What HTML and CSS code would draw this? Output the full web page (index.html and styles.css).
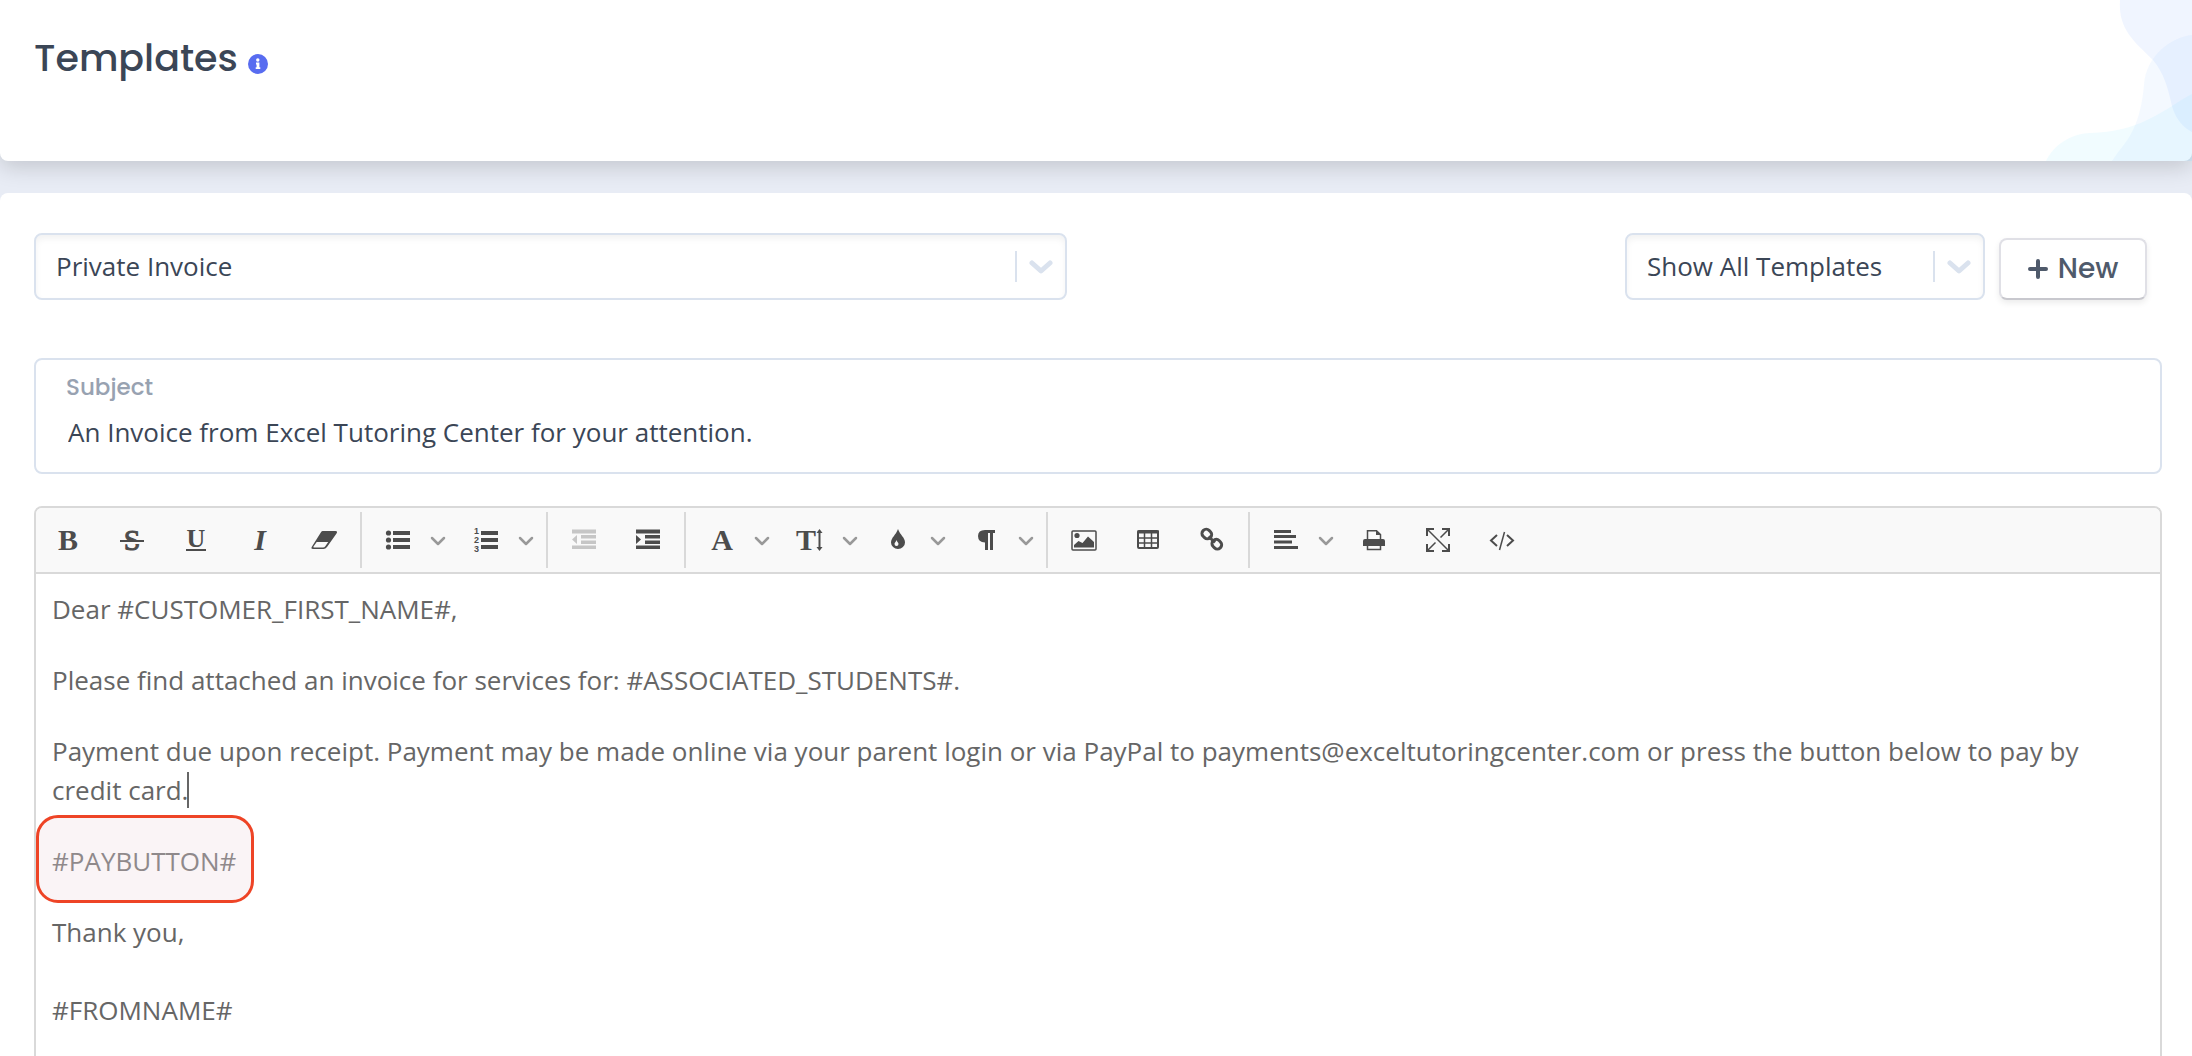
FILE: index.html
```html
<!DOCTYPE html>
<html lang="en">
<head>
    <meta charset="UTF-8">
    <meta name="viewport" content="width=device-width, initial-scale=1.0">
    <title>Templates</title>
    <link rel="stylesheet" href="styles.css">
</head>
<body>
    <header class="page-header">
        <h1>Templates</h1>
        <svg class="info" viewBox="0 0 20 20" role="img" aria-label="Info">
            <circle cx="10" cy="10" r="10" fill="#586cf0"/>
            <circle cx="9.8" cy="6" r="1.7" fill="#fff"/>
            <path d="M8 8.6h3.4v4.6h.9v1.8H7.7v-1.8h.9v-2.8H8z" fill="#fff"/>
        </svg>
        <svg class="blobs" viewBox="0 0 200 161" aria-hidden="true">
            <path fill="#5a8cfa" fill-opacity=".09" d="M128 0C126 30 143 42 161 60C172 73 176 88 180 106C184 120 192 128 200 132V0Z"/>
            <path fill="#96c8ff" fill-opacity=".1" d="M200 35C180 37 154 55 152 85C149 118 140 135 131 146Q125 153 120 161H200Z"/>
            <path fill="#73e1ff" fill-opacity=".1" d="M54 161C62 145 78 134 98 133C130 132 150 125 180 106Q192 98 200 94V161Z"/>
        </svg>
    </header>

    <main class="card">
        <div class="top-row">
            <div class="select-box template-select">
                <select aria-label="Template">
                    <option>Private Invoice</option>
                </select>
                <svg class="select-arrow" viewBox="0 0 24 16"><path d="M3 3l9 8 9-8"/></svg>
            </div>
            <div class="select-box filter-select">
                <select aria-label="Filter templates">
                    <option>Show All Templates</option>
                </select>
                <svg class="select-arrow" viewBox="0 0 24 16"><path d="M3 3l9 8 9-8"/></svg>
            </div>
            <button class="btn-new" type="button">
                <svg viewBox="0 0 20 20"><path d="M10 2v16M2 10h16"/></svg>
                New
            </button>
        </div>

        <div class="subject">
            <label for="subject">Subject</label>
            <input type="text" id="subject" value="An Invoice from Excel Tutoring Center for your attention.">
        </div>

        <div class="editor">
            <div class="toolbar" role="toolbar" aria-label="Formatting">
                <button type="button" title="Bold"><svg viewBox="0 0 32 32"><text x="16" y="26" class="glyph">B</text></svg></button>
                <button type="button" title="Strikethrough"><svg viewBox="0 0 32 32"><text x="16" y="26" class="glyph light">S</text><path class="halo" d="M4 19h24"/><path class="line" d="M4 17h24"/></svg></button>
                <button type="button" title="Underline"><svg viewBox="0 0 32 32"><text x="16" y="23" class="glyph small">U</text><path class="line" d="M6 26h20"/></svg></button>
                <button type="button" title="Italic"><svg viewBox="0 0 32 32"><text x="16" y="26" class="glyph italic">I</text></svg></button>
                <button type="button" title="Clear formatting"><svg viewBox="0 0 32 32"><path fill-rule="evenodd" d="M14.500 7H27.500Q30 7 28.500 9.500L19 23Q17.500 25 15.500 25H5Q2.500 25 4 22.500L12.500 9Q13.500 7 14.500 7ZM8.700 18L5.500 22.500Q5 23.500 6 23.500H15Q16.500 23.500 17.300 22.300L20.200 18Z"/></svg></button>
                <span class="sep"></span>
                <button type="button" title="Bulleted list"><svg viewBox="0 0 32 32"><circle cx="6.500" cy="9" r="2.600"/><circle cx="6.500" cy="16" r="2.600"/><circle cx="6.500" cy="23" r="2.600"/><path d="M11 7h17v4H11zM11 14h17v4H11zM11 21h17v4H11z"/></svg></button>
                <button type="button" class="drop" title="List options"><svg viewBox="0 0 16 16"><path d="M2 6l6 6 6-6"/></svg></button>
                <button type="button" title="Numbered list"><svg viewBox="0 0 32 32"><text x="4" y="10" class="digit">1</text><text x="4" y="19" class="digit">2</text><text x="4" y="28" class="digit">3</text><path d="M11 7h17v4H11zM11 14h17v4H11zM11 21h17v4H11z"/></svg></button>
                <button type="button" class="drop" title="Numbering options"><svg viewBox="0 0 16 16"><path d="M2 6l6 6 6-6"/></svg></button>
                <span class="sep"></span>
                <button type="button" title="Decrease indent" disabled><svg viewBox="0 0 32 32"><path d="M4 5.500h24v4H4zM13 11h15v3.500H13zM13 16.500h15v3.500H13zM4 21.500h24v3.500H4zM9 11v9l-5-4.500z"/></svg></button>
                <button type="button" title="Increase indent"><svg viewBox="0 0 32 32"><path d="M4 5.500h24v4H4zM13 11h15v3.500H13zM13 16.500h15v3.500H13zM4 21.500h24v3.500H4zM4 11v9l5-4.500z"/></svg></button>
                <span class="sep"></span>
                <button type="button" title="Font family"><svg viewBox="0 0 32 32"><text x="16" y="26" class="glyph">A</text></svg></button>
                <button type="button" class="drop" title="Font list"><svg viewBox="0 0 16 16"><path d="M2 6l6 6 6-6"/></svg></button>
                <button type="button" title="Font size"><svg viewBox="0 0 32 32"><text x="12" y="26" class="glyph">T</text><path d="M25.500 5l3 4h-2v14h2l-3 4-3-4h2V9h-2z"/></svg></button>
                <button type="button" class="drop" title="Size list"><svg viewBox="0 0 16 16"><path d="M2 6l6 6 6-6"/></svg></button>
                <button type="button" title="Colors"><svg viewBox="0 0 32 32"><path fill-rule="evenodd" d="M16 5C18 11 23 13.500 23 18.500A7 6.500 0 0 1 9 18.500C9 13.500 14 11 16 5ZM14.500 16C14 18 12.500 18.500 12.500 20A2 2 0 0 0 16.500 20C16.500 18.500 15 18 14.500 16Z"/></svg></button>
                <button type="button" class="drop" title="Color list"><svg viewBox="0 0 16 16"><path d="M2 6l6 6 6-6"/></svg></button>
                <button type="button" title="Paragraph format"><svg viewBox="0 0 32 32"><path d="M25 6v3h-2v17h-3V9h-2v17h-3v-7.500Q8 18 8 12T15 6z"/></svg></button>
                <button type="button" class="drop" title="Paragraph list"><svg viewBox="0 0 16 16"><path d="M2 6l6 6 6-6"/></svg></button>
                <span class="sep"></span>
                <button type="button" title="Insert image"><svg viewBox="0 0 32 32"><rect class="thin" x="4" y="7" width="24" height="19" rx="1"/><circle cx="9" cy="11.500" r="2.600"/><path d="M6 23.500v-2.500l4.500-4 4 2 5.500-6.500 6 5.500v5.500z"/></svg></button>
                <button type="button" title="Insert table"><svg viewBox="0 0 32 32"><rect class="line" x="6" y="7" width="20" height="17" rx="1"/><path d="M5.500 6.500h21.500V9.500H5.500z"/><path class="thin" d="M12.500 9v15.500M19.500 9v15.500M6 14h20M6 19h20"/></svg></button>
                <button type="button" title="Insert link"><svg viewBox="0 0 32 32"><g class="ring"><rect x="5.800" y="5.800" width="10" height="8.400" rx="4" transform="rotate(45 10.800 10)"/><rect x="15.800" y="16" width="10" height="8.400" rx="4" transform="rotate(45 20.800 20.200)"/><path d="M12.500 12.500l6.500 6"/></g></svg></button>
                <span class="sep"></span>
                <button type="button" title="Align"><svg viewBox="0 0 32 32"><path d="M4 6h17v3H4zM4 11h22v3H4zM4 16.500h18v3H4zM4 22h24v3H4z"/></svg></button>
                <button type="button" class="drop" title="Align options"><svg viewBox="0 0 16 16"><path d="M2 6l6 6 6-6"/></svg></button>
                <button type="button" title="Print"><svg viewBox="0 0 32 32"><path class="thin" d="M9.500 16V6.700H18.500L22.500 10.500V16M9.500 20V25.500H22.500V20"/><path d="M18 6v5h5zM7 15H25Q27 15 27 17V22H5V17Q5 15 7 15Z"/></svg></button>
                <button type="button" title="Fullscreen"><svg viewBox="0 0 32 32"><path class="line" d="M5 12V5h7M20 5h7v7M27 20v7h-7M12 27H5v-7"/><path class="thin" d="M5 5l22 22M27 5l-8.500 8.500M5 27l8.500-8.500"/></svg></button>
                <button type="button" title="Code view"><svg viewBox="0 0 32 32"><path class="line" d="M11 11l-6 5.500 6 5.500M21 11l6 5.500-6 5.500"/><path class="thin" d="M18.500 8l-5 18"/></svg></button>
            </div>
            <div class="content" contenteditable="true" spellcheck="false">
                <p>Dear #CUSTOMER_FIRST_NAME#,</p>
                <p>Please find attached an invoice for services for: #ASSOCIATED_STUDENTS#.</p>
                <p>Payment due upon receipt. Payment may be made online via your parent login or via PayPal to payments@exceltutoringcenter.com or press the button below to pay by credit card.<span class="caret"></span></p>
                <p><span class="marked">#PAYBUTTON#</span></p>
                <p>Thank you,<br><br>#FROMNAME#</p>
            </div>
        </div>
    </main>
</body>
</html>
```
FILE: styles.css
```css
* {
    box-sizing: border-box;
}

body {
    display: flex;
    flex-direction: column;
    height: 100vh;
    margin: 0;
    overflow: hidden;
    background-color: #e8ecf5;
    color: #3b4656;
    font-family: "Open Sans", sans-serif;
    font-size: 26px;
}

button,
input,
select {
    font: inherit;
    color: inherit;
}

.page-header {
    position: relative;
    display: flex;
    align-items: flex-start;
    gap: 10px;
    flex: none;
    min-height: 161px;
    padding: 32px 34px;
    background-color: #fff;
    border-radius: 0 0 8px 8px;
    box-shadow: 0 6px 22px rgba(0, 0, 0, 0.16);
}

h1 {
    margin: 0;
    font-family: Poppins, Inter, sans-serif;
    font-size: 38px;
    font-weight: 500;
    line-height: 52px;
}

.info {
    width: 20px;
    height: 20px;
    margin-top: 22px;
}

/* Decoration in the header corner */
.blobs {
    position: absolute;
    top: 0;
    right: 0;
    height: 100%;
}

.card {
    position: relative;
    display: flex;
    flex-direction: column;
    flex: 1;
    min-height: 0;
    margin-top: 32px;
    padding: 40px 30px 0 34px;
    background-color: #fff;
    border-radius: 8px 8px 0 0;
}

.top-row {
    display: flex;
    align-items: flex-end;
    margin-right: 15px;
}

.select-box {
    position: relative;
}

.template-select {
    width: calc(50% - 24px);
    margin-right: auto;
}

.filter-select {
    width: 360px;
    margin-right: 14px;
}

.select-box select {
    display: block;
    width: 100%;
    height: 67px;
    padding: 0 80px 2px 20px;
    appearance: none;
    background-color: #fff;
    border: 2px solid #dae2ee;
    border-radius: 8px;
    box-shadow: inset 0 4px 6px rgba(0, 0, 0, 0.05);
}

.select-box::after {
    content: "";
    position: absolute;
    top: 18px;
    right: 50px;
    width: 2px;
    height: 31px;
    background-color: #dae2ee;
}

.select-arrow {
    position: absolute;
    top: 27px;
    right: 14px;
    width: 24px;
    height: 16px;
    fill: none;
    stroke: #dae2ee;
    stroke-width: 5;
    stroke-linecap: round;
    stroke-linejoin: round;
    pointer-events: none;
}

.btn-new {
    display: flex;
    align-items: center;
    justify-content: center;
    gap: 10px;
    width: 148px;
    height: 62px;
    padding: 0;
    background-color: #fff;
    border: 2px solid #e0e0e6;
    border-bottom-color: #c8c8ce;
    border-radius: 8px;
    box-shadow: 0 3px 6px rgba(0, 0, 0, 0.08);
    color: #4f5a6b;
    font-family: Poppins, Inter, sans-serif;
    font-size: 28px;
    font-weight: 500;
}

.btn-new svg {
    width: 20px;
    height: 20px;
    stroke: #4f5a6b;
    stroke-width: 4;
    stroke-linecap: round;
}

.subject {
    display: flex;
    flex-direction: column;
    height: 116px;
    margin: 58px 0 32px;
    padding: 11px 30px;
    border: 2px solid #dae2ee;
    border-radius: 8px;
}

.subject label {
    color: #98a2b1;
    font-family: Poppins, Inter, sans-serif;
    font-size: 23px;
    font-weight: 500;
    line-height: 32px;
}

.subject input {
    width: 100%;
    height: 40px;
    margin-top: 9px;
    padding: 0 2px;
    background: none;
    border: none;
    outline: none;
}

.editor {
    display: flex;
    flex-direction: column;
    flex: 1;
    min-height: 0;
    border: 2px solid #d9d9d9;
    border-bottom: none;
    border-radius: 8px 8px 0 0;
}

.toolbar {
    display: flex;
    align-items: center;
    flex: none;
    height: 66px;
    background-color: #f9f9f9;
    border-bottom: 2px solid #d9d9d9;
    border-radius: 6px 6px 0 0;
}

.toolbar button {
    width: 64px;
    height: 64px;
    padding: 0 16px;
    background: none;
    border: none;
    color: #4c4c4c;
}

.toolbar button:disabled {
    color: #c6c6c6;
}

.toolbar svg {
    display: block;
    width: 32px;
    height: 32px;
    fill: currentColor;
}

.toolbar .drop {
    width: 24px;
    padding: 0;
    color: #999;
}

.toolbar .drop svg {
    width: 16px;
    height: 16px;
    fill: none;
    stroke: currentColor;
    stroke-width: 2.5;
    stroke-linecap: round;
    stroke-linejoin: round;
}

.sep {
    width: 2px;
    height: 56px;
    margin: 0 4px;
    background-color: #d9d9d9;
}

.glyph {
    font-family: "Liberation Serif", serif;
    font-size: 30px;
    font-weight: bold;
    text-anchor: middle;
}

.glyph.light {
    font-weight: normal;
    stroke: currentColor;
    stroke-width: 1;
}

.glyph.small {
    font-size: 26px;
}

.glyph.italic {
    font-style: italic;
}

.digit {
    font-family: "Liberation Sans", sans-serif;
    font-size: 9px;
    font-weight: bold;
}

.line,
.thin {
    fill: none;
    stroke: currentColor;
    stroke-width: 2;
}

.thin {
    stroke-width: 1.5;
}

.halo {
    stroke: #f9f9f9;
    stroke-width: 2;
}

.ring {
    fill: none;
    stroke: currentColor;
    stroke-width: 3;
}

.content {
    flex: 1;
    padding: 16px;
    outline: none;
    color: #666;
    line-height: 39px;
}

.content p {
    margin: 0 0 32px;
}

.caret {
    display: inline-block;
    width: 2px;
    height: 36px;
    margin: 0 -1px;
    background-color: #666;
    vertical-align: -8px;
}

.marked {
    position: relative;
}

/* Highlight frame around the pay button tag */
.marked::after {
    content: "";
    position: absolute;
    inset: -28px -18px -24px -16px;
    background-color: rgba(240, 220, 226, 0.3);
    border: 3px solid #ee4426;
    border-radius: 22px;
}
```
